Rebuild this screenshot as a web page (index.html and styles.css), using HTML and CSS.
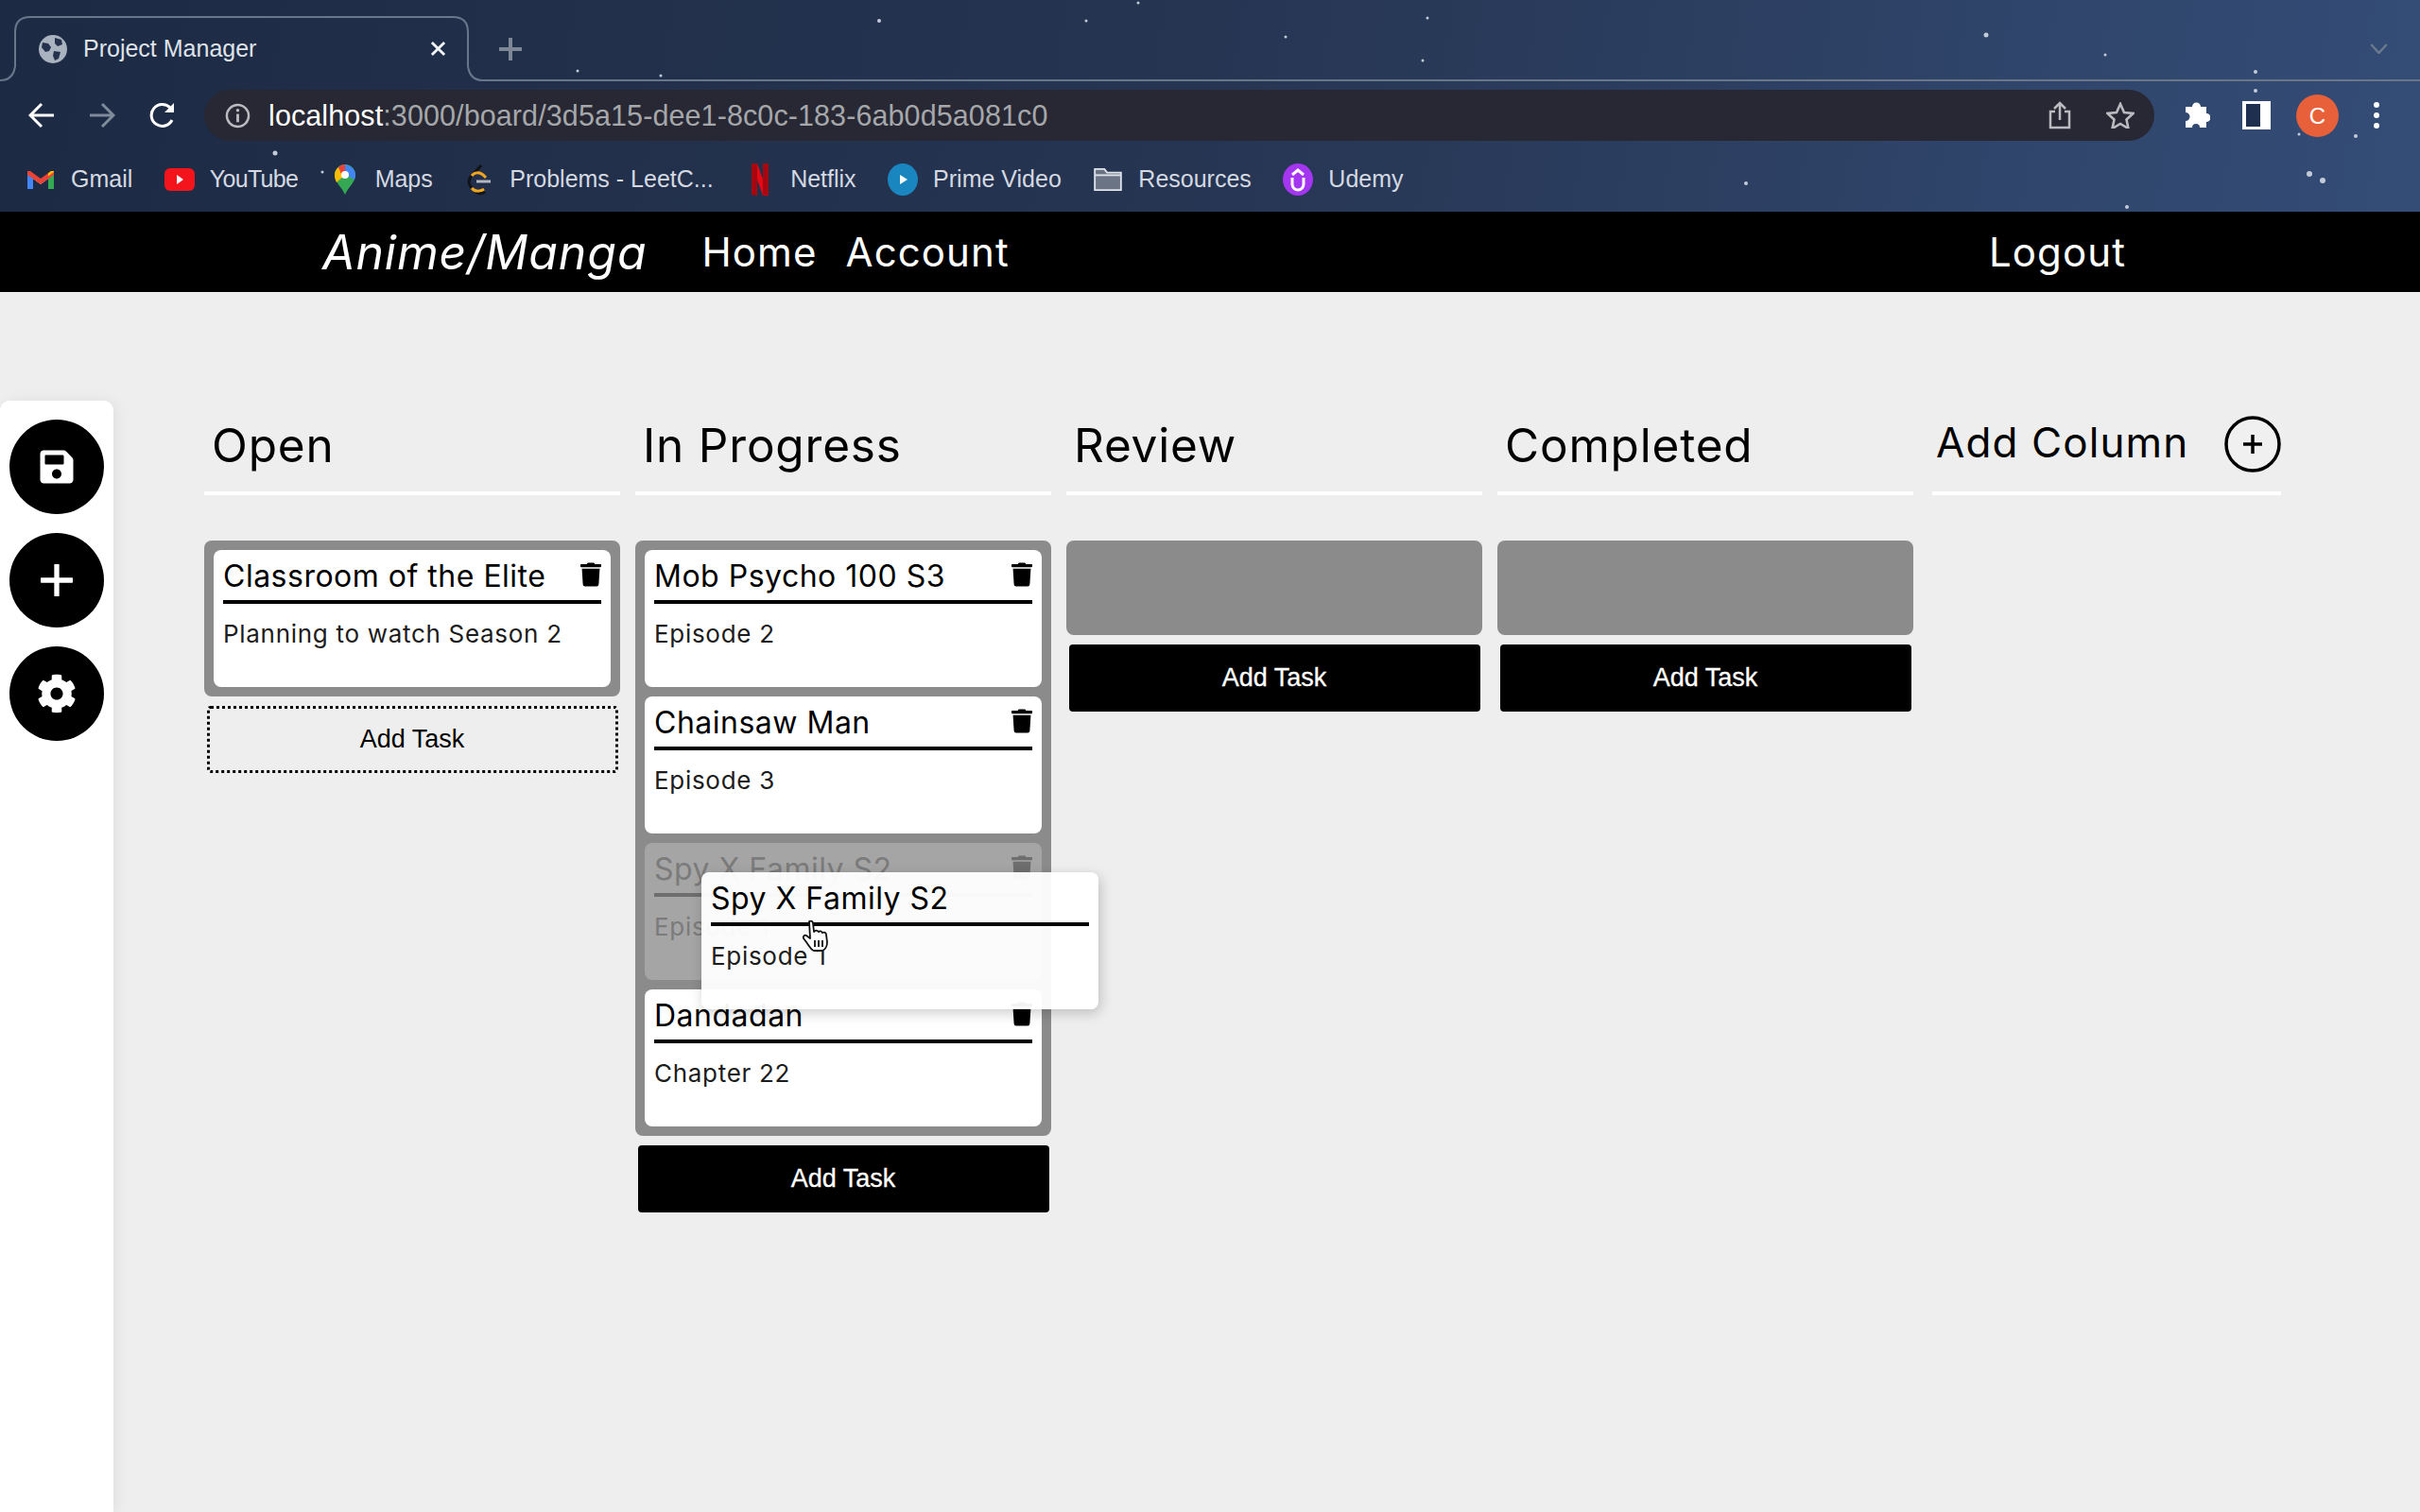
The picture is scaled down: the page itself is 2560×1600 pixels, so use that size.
FILE: index.html
```html
<!DOCTYPE html>
<html>
<head>
	<title>Project Manager</title>
	<link rel="stylesheet" href="styles.css">
</head>
<body>

	<div class="browser">
		<svg class="chrome-art" width="2560" height="224" viewBox="0 0 2560 224">
			<path d="M0 85Q14 85 16 70V34Q16 18 32 18H479Q495 18 495 34V70Q497 85 511 85H2560" fill="none" stroke="#69768a" stroke-width="2"/>
			<g fill="#c3cbd8">
				<circle cx="611" cy="75" r="1.5"/><circle cx="699" cy="80" r="1.5"/><circle cx="291" cy="162" r="2.5"/>
				<circle cx="341" cy="182" r="1.5"/><circle cx="930" cy="22" r="2"/><circle cx="1149" cy="22" r="1.5"/>
				<circle cx="1204" cy="3" r="1.5"/><circle cx="1510" cy="19" r="1.5"/><circle cx="1360" cy="39" r="1.5"/>
				<circle cx="1505" cy="64" r="1.5"/><circle cx="2101" cy="37" r="2.5"/><circle cx="2227" cy="58" r="1.5"/>
				<circle cx="2386" cy="76" r="2"/><circle cx="2386" cy="96" r="2"/><circle cx="1847" cy="194" r="2"/>
				<circle cx="2443" cy="184" r="3"/><circle cx="2457" cy="191" r="3"/><circle cx="2250" cy="219" r="2"/>
				<circle cx="2432" cy="142" r="1.5"/><circle cx="2492" cy="144" r="2"/>
			</g>
		</svg>

		<div class="tabstrip">
			<div class="tab">
				<svg class="favicon" viewBox="0 0 30 30">
					<circle cx="15" cy="15" r="15" fill="#a9b2bf"/>
					<path d="M4 8l6 1 3 4-2 4-4 1-4-5zM17 3l7 2 1 5-5 2-3-3zM16 17l7 1-2 7-4 2-2-5z" fill="#24324e"/>
				</svg>
				<span class="tab-title">Project Manager</span>
				<svg class="tab-close" viewBox="0 0 18 18"><path d="M2 2l14 14M16 2L2 16" stroke="#f2f4f7" stroke-width="3"/></svg>
			</div>
			<svg class="tab-new" viewBox="0 0 24 24"><path d="M12 0v24M0 12h24" stroke="#7d8796" stroke-width="4"/></svg>
			<svg class="tab-more" viewBox="0 0 20 12"><path d="M1 1l9 10 9-10" fill="none" stroke="#6d7a8d" stroke-width="2.5"/></svg>
		</div>

		<div class="toolbar">
			<svg class="nav-icon" viewBox="0 0 28 28"><path d="M27 14H3M14 2L2 14l12 12" fill="none" stroke="#fff" stroke-width="3"/></svg>
			<svg class="nav-icon nav-forward" viewBox="0 0 28 28"><path d="M1 14h24M14 2l12 12-12 12" fill="none" stroke="#7f8a9b" stroke-width="3"/></svg>
			<svg class="nav-icon nav-reload" viewBox="0 0 28 28"><path d="M24 19A11.5 11.5 0 1 1 22 6" fill="none" stroke="#fff" stroke-width="3"/><path d="M26 1v10H16z" fill="#fff"/></svg>
			<div class="omnibox">
				<svg class="info-icon" viewBox="0 0 28 28"><circle cx="14" cy="14" r="12" fill="none" stroke="#b9bbc0" stroke-width="2.5"/><path d="M14 12v9" stroke="#b9bbc0" stroke-width="3"/><circle cx="14" cy="8" r="1.8" fill="#b9bbc0"/></svg>
				<span class="url"><span class="url-host">localhost</span>:3000/board/3d5a15-dee1-8c0c-183-6ab0d5a081c0</span>
				<svg class="share-icon" viewBox="0 0 24 30"><path d="M7 11H2v17h20V11h-5M12 20V2M6 8l6-6 6 6" fill="none" stroke="#b9bbc0" stroke-width="2.5"/></svg>
				<svg class="star-icon" viewBox="0 0 30 28"><path d="M15 2l4 9 9.500 1-7 6.500 2 9.500-8.500-5-8.500 5 2-9.500-7-6.500 9.500-1z" fill="none" stroke="#b9bbc0" stroke-width="2.6"/></svg>
			</div>
			<svg class="puzzle-icon" viewBox="0 0 30 30"><path d="M11 6a4.500 4.500 0 0 1 9 0h6v7a4.500 4.500 0 0 1 0 9v6h-7a4 4 0 0 0-8 0H4v-7a4.500 4.500 0 0 0 0-9V6z" fill="#fff"/></svg>
			<div class="panel-icon"></div>
			<div class="avatar">C</div>
			<div class="kebab"><i></i><i></i><i></i></div>
		</div>

		<div class="bookmarks">
			<div class="bookmark">
				<svg class="bm-icon" viewBox="0 0 32 24"><path d="M2 22V4l14 10L30 4v18h-6V11l-8 6-8-6v11z" fill="#e9e9ee"/><path d="M2 22V4l6 4.500V22z" fill="#4285f4"/><path d="M24 22V8.500L30 4v18z" fill="#34a853"/><path d="M2 7V3l3 0 11 8 11-8 3 0v4L16 17z" fill="#ea4335"/><path d="M24 8.500l6-4.500V3l-3 0-3 2.200z" fill="#fbbc04"/></svg>
				<span>Gmail</span>
			</div>
			<div class="bookmark">
				<svg class="bm-icon" viewBox="0 0 32 24"><rect width="32" height="24" rx="6" fill="#f4141c"/><path d="M13 7l7 5-7 5z" fill="#fff"/></svg>
				<span class="bm-youtube">YouTube</span>
			</div>
			<div class="bookmark">
				<svg class="bm-icon bm-tall" viewBox="0 0 32 34"><path d="M16 33C12 24 5 20 5 12a11 11 0 0 1 22 0c0 8-7 12-11 21z" fill="#34a853"/><path d="M9 4a11 11 0 0 1 18 8c0 2-.5 3.500-1 5L16 12z" fill="#4285f4"/><path d="M5 12a11 11 0 0 1 4-8l7 8-9 8c-1-2-2-5-2-8z" fill="#fbbc04"/><path d="M9 4a11 11 0 0 1 7-3v8l-4 2z" fill="#ea4335"/><circle cx="16" cy="12" r="4" fill="#fff"/></svg>
				<span>Maps</span>
			</div>
			<div class="bookmark">
				<svg class="bm-icon bm-tall" viewBox="0 0 32 34"><path d="M18 2L7 14c-3 4-2 9 1 12l4 4c3 2 7 2 10 0" fill="none" stroke="#10131a" stroke-width="3"/><path d="M8 13c3-4 8-4 12-1l3 3" fill="none" stroke="#f0a51e" stroke-width="3"/><path d="M8 26c3 4 9 4 13 1" fill="none" stroke="#f0a51e" stroke-width="3"/><path d="M13 19h15" stroke="#b3b8c0" stroke-width="3"/></svg>
				<span>Problems - LeetC...</span>
			</div>
			<div class="bookmark">
				<svg class="bm-icon bm-tall" viewBox="0 0 32 34"><path d="M7 0h6l12 34h-6z" fill="#e50914"/><path d="M7 0h6v34l-6-1zM19 0h6v33l-6 1z" fill="#a80710"/></svg>
				<span>Netflix</span>
			</div>
			<div class="bookmark">
				<svg class="bm-icon bm-tall" viewBox="0 0 32 34"><ellipse cx="16" cy="17" rx="16" ry="17" fill="#1a86c0"/><path d="M13 12l8 5-8 5z" fill="#fff"/></svg>
				<span>Prime Video</span>
			</div>
			<div class="bookmark">
				<svg class="bm-icon" viewBox="0 0 32 26"><path d="M1 1h11l3 4h16v20H1z" fill="#6b7485" stroke="#dfe3ea" stroke-width="2"/><path d="M1 8h30" stroke="#dfe3ea" stroke-width="2"/></svg>
				<span>Resources</span>
			</div>
			<div class="bookmark">
				<svg class="bm-icon bm-tall" viewBox="0 0 32 34"><ellipse cx="16" cy="17" rx="16" ry="17" fill="#a435f0"/><path d="M10 15v7a6 6 0 0 0 12 0v-7M10 12l6-5 6 5" fill="none" stroke="#fff" stroke-width="3"/></svg>
				<span>Udemy</span>
			</div>
		</div>
	</div>

	<nav class="navbar">
		<a class="brand">Anime/Manga</a>
		<a class="nav-link nav-home">Home</a>
		<a class="nav-link nav-account">Account</a>
		<a class="nav-link nav-logout">Logout</a>
	</nav>

	<div class="main">
		<aside class="sidebar">
			<div class="side-btn">
				<svg class="side-save" viewBox="0 0 448 512"><path d="M433.941 129.941l-83.882-83.882A48 48 0 0 0 316.118 32H48C21.490 32 0 53.490 0 80v352c0 26.510 21.490 48 48 48h352c26.510 0 48-21.490 48-48V163.882a48 48 0 0 0-14.059-33.941zM224 416c-35.346 0-64-28.654-64-64 0-35.346 28.654-64 64-64s64 28.654 64 64c0 35.346-28.654 64-64 64zm96-304.520V212c0 6.627-5.373 12-12 12H76c-6.627 0-12-5.373-12-12V108c0-6.627 5.373-12 12-12h228.520c3.183 0 6.235 1.264 8.485 3.515l3.480 3.480A11.996 11.996 0 0 1 320 111.480z" fill="#fff"/></svg>
			</div>
			<div class="side-btn">
				<svg class="side-plus" viewBox="0 0 32 32"><path d="M16 1v30M1 16h30" stroke="#fff" stroke-width="5" stroke-linecap="round"/></svg>
			</div>
			<div class="side-btn">
				<svg class="side-gear" viewBox="0 0 512 512"><path d="M487.400 315.700l-42.600-24.600c4.300-23.200 4.300-47 0-70.200l42.600-24.600c4.900-2.800 7.100-8.600 5.500-14-11.100-35.600-30-67.800-54.700-94.600-3.800-4.100-10-5.100-14.800-2.300L380.800 110c-17.900-15.400-38.500-27.300-60.800-35.100V25.800c0-5.600-3.900-10.500-9.400-11.700-36.700-8.200-74.300-7.800-109.200 0-5.500 1.200-9.400 6.100-9.400 11.700V75c-22.200 7.900-42.800 19.800-60.800 35.100L88.700 85.500c-4.900-2.800-11-1.900-14.800 2.300-24.700 26.700-43.600 58.900-54.700 94.600-1.700 5.400.6 11.200 5.500 14L67.300 221c-4.300 23.200-4.300 47 0 70.200l-42.600 24.600c-4.900 2.800-7.100 8.600-5.500 14 11.100 35.600 30 67.800 54.700 94.600 3.800 4.100 10 5.100 14.800 2.300l42.600-24.600c17.900 15.400 38.500 27.300 60.800 35.100v49.200c0 5.600 3.900 10.500 9.400 11.700 36.700 8.200 74.300 7.800 109.200 0 5.500-1.200 9.400-6.100 9.400-11.700v-49.200c22.200-7.900 42.800-19.800 60.800-35.100l42.600 24.600c4.900 2.800 11 1.900 14.800-2.300 24.700-26.700 43.600-58.900 54.700-94.600 1.500-5.500-.7-11.300-5.600-14.100zM256 336c-44.100 0-80-35.900-80-80s35.900-80 80-80 80 35.900 80 80-35.900 80-80 80z" fill="#fff"/></svg>
			</div>
		</aside>

		<div class="board">
			<section class="column">
				<h2 class="column-title">Open</h2>
				<div class="task-list">
					<div class="card">
						<div class="card-head">
							<span class="card-title">Classroom of the Elite</span>
							<svg class="trash" viewBox="0 0 448 512"><path d="M432 32H312l-9.400-18.700A24 24 0 0 0 281.100 0H166.800a23.720 23.720 0 0 0-21.400 13.300L136 32H16A16 16 0 0 0 0 48v32a16 16 0 0 0 16 16h416a16 16 0 0 0 16-16V48a16 16 0 0 0-16-16zM53.200 467a48 48 0 0 0 47.900 45h245.800a48 48 0 0 0 47.900-45L416 128H32z"/></svg>
						</div>
						<p class="card-desc">Planning to watch Season 2</p>
					</div>
				</div>
				<button class="add-task add-task-dotted">Add Task</button>
			</section>

			<section class="column">
				<h2 class="column-title">In Progress</h2>
				<div class="task-list">
					<div class="card">
						<div class="card-head">
							<span class="card-title">Mob Psycho 100 S3</span>
							<svg class="trash" viewBox="0 0 448 512"><path d="M432 32H312l-9.400-18.700A24 24 0 0 0 281.100 0H166.800a23.720 23.720 0 0 0-21.400 13.300L136 32H16A16 16 0 0 0 0 48v32a16 16 0 0 0 16 16h416a16 16 0 0 0 16-16V48a16 16 0 0 0-16-16zM53.200 467a48 48 0 0 0 47.900 45h245.800a48 48 0 0 0 47.900-45L416 128H32z"/></svg>
						</div>
						<p class="card-desc">Episode 2</p>
					</div>
					<div class="card">
						<div class="card-head">
							<span class="card-title">Chainsaw Man</span>
							<svg class="trash" viewBox="0 0 448 512"><path d="M432 32H312l-9.400-18.700A24 24 0 0 0 281.100 0H166.800a23.720 23.720 0 0 0-21.400 13.300L136 32H16A16 16 0 0 0 0 48v32a16 16 0 0 0 16 16h416a16 16 0 0 0 16-16V48a16 16 0 0 0-16-16zM53.200 467a48 48 0 0 0 47.900 45h245.800a48 48 0 0 0 47.900-45L416 128H32z"/></svg>
						</div>
						<p class="card-desc">Episode 3</p>
					</div>
					<div class="card card-ghost">
						<div class="card-head">
							<span class="card-title">Spy X Family S2</span>
							<svg class="trash" viewBox="0 0 448 512"><path d="M432 32H312l-9.400-18.700A24 24 0 0 0 281.100 0H166.800a23.720 23.720 0 0 0-21.400 13.300L136 32H16A16 16 0 0 0 0 48v32a16 16 0 0 0 16 16h416a16 16 0 0 0 16-16V48a16 16 0 0 0-16-16zM53.200 467a48 48 0 0 0 47.900 45h245.800a48 48 0 0 0 47.900-45L416 128H32z"/></svg>
						</div>
						<p class="card-desc">Episode 1</p>
					</div>
					<div class="card">
						<div class="card-head">
							<span class="card-title">Dandadan</span>
							<svg class="trash" viewBox="0 0 448 512"><path d="M432 32H312l-9.400-18.700A24 24 0 0 0 281.100 0H166.800a23.720 23.720 0 0 0-21.400 13.300L136 32H16A16 16 0 0 0 0 48v32a16 16 0 0 0 16 16h416a16 16 0 0 0 16-16V48a16 16 0 0 0-16-16zM53.200 467a48 48 0 0 0 47.900 45h245.800a48 48 0 0 0 47.900-45L416 128H32z"/></svg>
						</div>
						<p class="card-desc">Chapter 22</p>
					</div>

					<div class="card card-drag">
						<div class="card-head">
							<span class="card-title">Spy X Family S2</span>
						</div>
						<p class="card-desc">Episode 1</p>
						<svg class="hand-cursor" viewBox="0 0 30 34"><path d="M8 2c2-1 4 0 4 2l1 9 1-1c2-1 3 0 4 1 1-1 3-1 4 1 2-1 4 0 4 2l1 8c0 4-2 8-5 9H13c-3-1-5-5-8-9l-3-4c-1-2 1-4 3-3l4 3z" fill="#fff" stroke="#111" stroke-width="1.800" stroke-linejoin="round"/><path d="M14 22v7M18 22v7M22 22v7" stroke="#111" stroke-width="1.800"/></svg>
					</div>
				</div>
				<button class="add-task">Add Task</button>
			</section>

			<section class="column">
				<h2 class="column-title">Review</h2>
				<div class="task-list task-list-empty"></div>
				<button class="add-task">Add Task</button>
			</section>

			<section class="column">
				<h2 class="column-title">Completed</h2>
				<div class="task-list task-list-empty"></div>
				<button class="add-task">Add Task</button>
			</section>

			<section class="column column-add">
				<div class="column-title add-column">
					<span class="add-column-label">Add Column</span>
					<svg class="add-column-btn" viewBox="0 0 60 60"><circle cx="30" cy="30" r="28" fill="#f0f0f0" stroke="#000" stroke-width="3.500"/><path d="M30 20v20M20 30h20" stroke="#000" stroke-width="3.500"/></svg>
				</div>
			</section>
		</div>
	</div>

</body>
</html>
```

FILE: styles.css
```css
html, body {
	margin: 0;
	padding: 0;
}
body {
	width: 2560px;
	min-height: 1600px;
	background-color: #eeeeee;
	font-family: "Inter", "Liberation Sans", sans-serif;
	color: #000;
	overflow: hidden;
}

/* browser chrome */
.browser {
	position: relative;
	height: 224px;
	background: linear-gradient(100deg, #1d2a44 0%, #263552 50%, #344d77 100%);
	font-family: "Liberation Sans", sans-serif;
}
.chrome-art {
	position: absolute;
	left: 0;
	top: 0;
}
.tabstrip {
	position: relative;
	height: 85px;
	display: flex;
	align-items: center;
	padding: 18px 34px 0 41px;
	box-sizing: border-box;
}
.tab {
	width: 431px;
	display: flex;
	align-items: center;
}
.favicon {
	width: 30px;
	height: 30px;
	margin-right: 17px;
}
.tab-title {
	flex: 1;
	font-size: 25px;
	color: #dfe3ea;
}
.tab-close {
	width: 17px;
	height: 17px;
}
.tab-new {
	width: 24px;
	height: 24px;
	margin-left: 56px;
}
.tab-more {
	width: 19px;
	height: 11px;
	margin-left: auto;
}

.toolbar {
	position: relative;
	height: 74px;
	display: flex;
	align-items: center;
	padding-left: 30px;
	box-sizing: border-box;
}
.nav-icon {
	width: 28px;
	height: 28px;
	margin-right: 36px;
}
.nav-reload {
	margin-right: 30px;
}
.omnibox {
	width: 2063px;
	height: 54px;
	border-radius: 27px;
	background-color: #272833;
	display: flex;
	align-items: center;
	padding-left: 22px;
	box-sizing: border-box;
}
.info-icon {
	width: 27px;
	height: 27px;
	margin-right: 19px;
}
.url {
	font-size: 30.5px;
	letter-spacing: 0.1px;
	color: #a5a7ab;
	flex: 1;
}
.url-host {
	color: #fff;
}
.share-icon {
	width: 24px;
	height: 30px;
	margin-right: 37px;
}
.star-icon {
	width: 30px;
	height: 28px;
	margin-right: 21px;
}
.puzzle-icon {
	width: 30px;
	height: 30px;
	margin-left: 29px;
}
.panel-icon {
	width: 30px;
	height: 30px;
	box-sizing: border-box;
	margin-left: 34px;
	background-color: #1f2f4f;
	border: solid #fff;
	border-width: 3px 11px 3px 4px;
}
.avatar {
	width: 45px;
	height: 45px;
	margin-left: 27px;
	border-radius: 50%;
	background-color: #e8603a;
	color: #fff;
	font-size: 24px;
	text-align: center;
	line-height: 45px;
}
.kebab {
	margin-left: 37px;
	display: flex;
	flex-direction: column;
	gap: 5px;
}
.kebab i {
	display: block;
	width: 6px;
	height: 6px;
	border-radius: 50%;
	background-color: #fff;
}

.bookmarks {
	position: relative;
	height: 65px;
	display: flex;
	align-items: center;
	gap: 33.5px;
	padding: 0 0 4px 27px;
	box-sizing: border-box;
	font-size: 25px;
	color: #d4d9e2;
}
.bookmark {
	display: flex;
	align-items: center;
	gap: 16px;
}
.bm-icon {
	width: 32px;
	height: 24px;
}
.bm-tall {
	height: 34px;
}
.bm-youtube {
	letter-spacing: -0.7px;
}

/* app header */
.navbar {
	height: 85px;
	background-color: #000;
	display: flex;
	align-items: center;
	color: #fff;
	padding-left: 341px;
	box-sizing: border-box;
}
.brand {
	font-size: 50px;
	font-style: italic;
	font-weight: 400;
	margin-right: 58px;
	letter-spacing: 0.9px;
}
.nav-link {
	font-size: 42px;
	font-weight: 400;
	letter-spacing: 1.1px;
}
.nav-account {
	margin-left: 30px;
}
.nav-logout {
	margin-left: auto;
	margin-right: 311px;
}

/* left rail */
.main {
	display: flex;
	align-items: flex-start;
}
.sidebar {
	width: 120px;
	height: 1176px;
	margin-top: 115px;
	padding: 20px 0 0 10px;
	box-sizing: border-box;
	display: flex;
	flex-direction: column;
	gap: 20px;
	background-color: #fff;
	border-radius: 10px 10px 0 0;
	box-shadow: 4px 0 14px rgba(0, 0, 0, 0.06);
}
.side-btn {
	width: 100px;
	height: 100px;
	border-radius: 50%;
	background-color: #000;
	display: flex;
	align-items: center;
	justify-content: center;
}
.side-save {
	width: 36px;
	height: 40px;
}
.side-plus {
	width: 34px;
	height: 34px;
}
.side-gear {
	width: 42px;
	height: 42px;
}

/* board */
.board {
	display: flex;
	gap: 16px;
	padding-left: 96px;
	margin-top: 115px;
}
.column {
	width: 440px;
}
.column-add {
	width: 369px;
	margin-left: 4px;
}
.column-title {
	height: 100px;
	margin: 0 0 48px 0;
	padding: 19px 0 0 8px;
	box-sizing: border-box;
	border-bottom: 4px solid #fff;
	font-size: 49.5px;
	font-weight: 400;
	line-height: 56px;
	letter-spacing: 0.8px;
}
.add-column {
	display: flex;
	align-items: flex-start;
	justify-content: space-between;
	padding: 16px 0 0 4px;
}
.add-column-label {
	font-size: 44px;
	font-weight: 400;
	letter-spacing: 1.1px;
}
.add-column-btn {
	width: 60px;
	height: 60px;
}
.task-list {
	position: relative;
	background-color: #8b8b8b;
	border-radius: 8px;
	padding: 10px;
	display: flex;
	flex-direction: column;
	gap: 10px;
}
.task-list-empty {
	height: 100px;
	box-sizing: border-box;
}
.card {
	height: 145px;
	box-sizing: border-box;
	padding: 10px;
	background-color: #fff;
	border-radius: 8px;
}
.card-head {
	display: flex;
	justify-content: space-between;
	align-items: flex-start;
	height: 47px;
	box-sizing: border-box;
	padding-bottom: 7px;
	border-bottom: 4px solid #000;
}
.card-title {
	font-size: 32px;
	line-height: 36px;
	letter-spacing: 0.5px;
}
.trash {
	width: 22px;
	height: 26px;
	margin-top: 3px;
}
.card-desc {
	margin: 17px 0 0 0;
	font-size: 26px;
	line-height: 30px;
	letter-spacing: 0.7px;
	color: #1c1c1c;
}
.card-ghost {
	background-color: #a5a5a5;
	color: #7b7b7b;
}
.card-ghost .card-desc {
	color: #7b7b7b;
}
.card-ghost .card-head {
	border-bottom-color: #6e6e6e;
}
.card-ghost .trash {
	fill: #6e6e6e;
}
.card-drag {
	position: absolute;
	left: 70px;
	top: 351px;
	width: 420px;
	background-color: rgba(255, 255, 255, 0.95);
	box-shadow: 2px 4px 14px rgba(0, 0, 0, 0.2);
}
.hand-cursor {
	position: absolute;
	left: 106px;
	top: 50px;
	width: 30px;
	height: 34px;
}
.add-task {
	display: block;
	width: 435px;
	height: 71px;
	margin: 10px auto 0 auto;
	background-color: #000;
	color: #fff;
	border: 0;
	border-radius: 4px;
	font-family: "Liberation Sans", sans-serif;
	font-size: 27px;
	-webkit-text-stroke: 0.3px currentColor;
}
.add-task-dotted {
	background-color: transparent;
	color: #000;
	border: 3px dotted #000;
	-webkit-text-stroke: 0;
}
```
